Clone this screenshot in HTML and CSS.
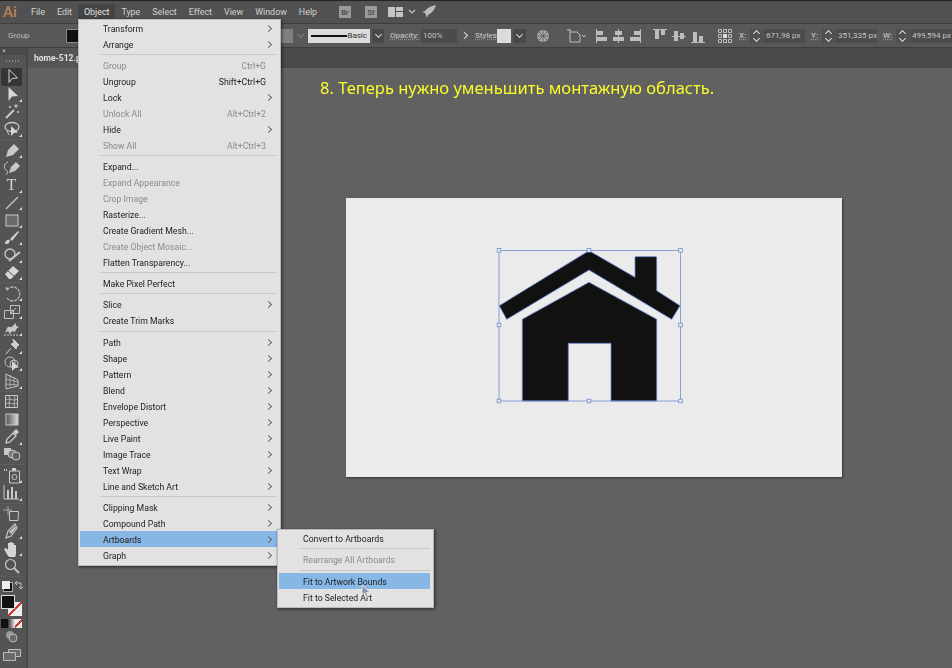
FILE: index.html
```html
<!DOCTYPE html>
<html lang="en">

<head>
    <meta charset="UTF-8">
    <meta name="viewport" content="width=device-width, initial-scale=1.0">
    <title>Illustrator</title>
    <link rel="stylesheet" href="styles.css">
</head>

<body>
    <div class="app">
        <!-- menu bar -->
        <header class="menubar">
            <span class="logo">Ai</span>
            <nav class="menus">
                <span class="menu-title">File</span>
                <span class="menu-title">Edit</span>
                <span class="menu-title active">Object</span>
                <span class="menu-title">Type</span>
                <span class="menu-title">Select</span>
                <span class="menu-title">Effect</span>
                <span class="menu-title">View</span>
                <span class="menu-title">Window</span>
                <span class="menu-title">Help</span>
            </nav>
            <span class="chip chip-br">Br</span>
            <span class="chip chip-st">St</span>
            <svg class="bar-icon" width="34" height="12" viewBox="0 0 34 12">
                <path d="M0 1h7v10H0zM8 1h7v4H8zM8 6h7v5H8z" fill="#c4c4c4" />
                <path d="M21 4l3 3 3-3" fill="none" stroke="#c4c4c4" stroke-width="1.2" />
            </svg>
            <svg class="bar-icon rocket" width="14" height="14" viewBox="0 0 14 14">
                <path d="M14 0C9 1 5 3 3 6L0 7l3 1 1 2 1 3 1-3c4-2 7-6 8-10z" fill="#bdbdbd" />
            </svg>
        </header>

        <!-- control bar -->
        <div class="controlbar">
            <span class="ctl-label">Group</span>
            <span class="fill-swatch"></span>
            <span></span>
            <span class="grey-chip"></span>
            <span class="chev dim"></span>
            <span class="stroke-box"><i class="stroke-line"></i>Basic</span>
            <span class="chev btn"></span>
            <span class="ctl-label dotted op-label">Opacity:</span>
            <span class="field">100%</span>
            <span class="next"></span>
            <span class="ctl-label dotted st-label">Styles:</span>
            <span class="style-swatch"></span>
            <span class="chev btn"></span>
            <svg class="ctl-icon globe" width="14" height="14" viewBox="0 0 14 14">
                <circle cx="7" cy="7" r="6" fill="#a8a8a8" />
                <path d="M7 1v12M1 7h12M3 3l8 8M11 3l-8 8" stroke="#5a5a5a" stroke-width=".8" />
            </svg>
            <svg class="ctl-icon ab-icon" width="20" height="14" viewBox="0 0 20 14">
                <path d="M3 3h7l3 3v7H3z" fill="none" stroke="#bdbdbd" />
                <path d="M0 1h3M3 0v3" stroke="#bdbdbd" />
                <path d="M15 6l2 2 2-2" fill="none" stroke="#bdbdbd" />
            </svg>
            <div class="aligns">
                <svg width="116" height="14" viewBox="0 0 116 14">
                    <g fill="#bdbdbd">
                        <path d="M2 0h1v14H2zM3 2h6v4H3zM3 8h10v4H3z" />
                        <path d="M24 0h1v14h-1zM21 2h7v4h-7zM19 8h11v4H19z" />
                        <path d="M46 0h1v14h-1zM40 2h6v4h-6zM36 8h10v4H36z" />
                        <path d="M59 0h14v1H59zM61 1h4v9h-4zM67 1h4v5h-4z" />
                        <path d="M78 7h14v1H78zM80 2h4v10h-4zM86 4h4v6h-4z" />
                        <path d="M97 13h14v1H97zM99 3h4v10h-4zM105 7h4v6h-4z" />
                    </g>
                </svg>
            </div>
            <svg class="ctl-icon ref-point" width="14" height="14" viewBox="0 0 14 14">
                <path d="M.5.5h3v3h-3zM5.5.5h3v3h-3zM10.5.5h3v3h-3zM.5 5.5h3v3h-3zM10.5 5.5h3v3h-3zM.5 10.5h3v3h-3zM5.5 10.5h3v3h-3zM10.5 10.5h3v3h-3z" fill="none" stroke="#bdbdbd" />
                <path d="M5 5h4v4H5z" fill="#dcdcdc" />
            </svg>
            <span class="ctl-label dotted x-label">X:</span>
            <div class="num"><span class="stepper"></span><span class="field">671,98 px</span></div>
            <span class="ctl-label dotted xy">Y:</span>
            <div class="num"><span class="stepper"></span><span class="field">351,335 px</span></div>
            <span class="ctl-label dotted xy">W:</span>
            <div class="num"><span class="stepper"></span><span class="field">499,594 px</span></div>
        </div>

        <div class="workspace">
            <!-- tools -->
            <aside class="toolbar">
                <div class="panel-head">&raquo;</div>
                <div class="grip"></div>
                <div class="tool-group">
                    <div class="tool selected"><svg width="18" height="17" viewBox="0 0 18 17"><path d="M6 1.5v13l3-4 5.5-.5z" fill="none" stroke="#d6d6d6" /></svg></div>
                    <div class="tool more"><svg width="18" height="17" viewBox="0 0 18 17"><path d="M5.5 1v14L9 10.5l6-.5z" fill="#d6d6d6" /></svg></div>
                    <div class="tool"><svg width="18" height="17" viewBox="0 0 18 17"><path d="M3 15l8-8" stroke="#d0d0d0" stroke-width="1.8" /><path d="M13 1v4M11 3h4M7 3v2M6 4h2M15 8v2M14 9h2" stroke="#d0d0d0" /></svg></div>
                    <div class="tool more"><svg width="18" height="17" viewBox="0 0 18 17"><ellipse cx="9" cy="6" rx="7" ry="4.5" fill="none" stroke="#c8c8c8" stroke-width="1.3" /><path d="M8 5v10l3-3 4-.5z" fill="#d6d6d6" /><path d="M4 10l2 4" stroke="#c8c8c8" /></svg></div>
                </div>
                <div class="tool-group">
                    <div class="tool more"><svg width="18" height="17" viewBox="0 0 18 17"><path d="M3 15l2-7 6-6 5 5-6 6z" fill="#c8c8c8" /></svg></div>
                    <div class="tool"><svg width="18" height="17" viewBox="0 0 18 17"><path d="M6 14l2-6 5-5 4 4-5 5z" fill="#c8c8c8" /><path d="M5 3C0 5 1 10 3 11s2 3 0 5" fill="none" stroke="#c8c8c8" /></svg></div>
                    <div class="tool more type-tool">T</div>
                    <div class="tool more"><svg width="18" height="17" viewBox="0 0 18 17"><path d="M3 15L15 3" stroke="#c8c8c8" stroke-width="1.2" /></svg></div>
                    <div class="tool more"><svg width="18" height="17" viewBox="0 0 18 17"><rect x="3" y="3" width="12" height="11" fill="#6a6a6a" stroke="#c8c8c8" /></svg></div>
                    <div class="tool more"><svg width="18" height="17" viewBox="0 0 18 17"><path d="M2 15c0-4 3-5 5-4l-1 3c-1 1-3 1-4 1zM7 10l8-8 1 1-7 9z" fill="#d0d0d0" /></svg></div>
                    <div class="tool more"><svg width="18" height="17" viewBox="0 0 18 17"><circle cx="7" cy="7" r="5" fill="none" stroke="#c8c8c8" stroke-width="1.3" /><path d="M6 14L17 5" stroke="#c8c8c8" stroke-width="2" /></svg></div>
                    <div class="tool more"><svg width="18" height="17" viewBox="0 0 18 17"><path d="M2 10l8-8 6 5-8 8H6z" fill="#d6d6d6" /><path d="M5 7l6 5" stroke="#535353" /></svg></div>
                </div>
                <div class="tool-group">
                    <div class="tool more"><svg width="18" height="17" viewBox="0 0 18 17"><path d="M4 5a7 7 0 1 1 0 8" fill="none" stroke="#b8b8b8" stroke-width="1.3" stroke-dasharray="3 1" /><path d="M2 2l4 1-2 3z" fill="#b8b8b8" /></svg></div>
                    <div class="tool more"><svg width="18" height="17" viewBox="0 0 18 17"><path d="M1.5 7.5h9v8h-9zM7.5 2.5h9v8h-9z" fill="none" stroke="#c0c0c0" /><path d="M7 11l6-6" stroke="#c0c0c0" /></svg></div>
                    <div class="tool more"><svg width="18" height="17" viewBox="0 0 18 17"><path d="M2 13c2-4 2-7 5-6s4-4 6-4c-1 2 0 3 3 4-2 1-3 2-4 5l-3-1-2 3-2-3z" fill="#c8c8c8" /><path d="M1 15h14" stroke="#c8c8c8" stroke-dasharray="2 1" /></svg></div>
                    <div class="tool more"><svg width="18" height="17" viewBox="0 0 18 17"><path d="M10 1l6 6-2 1-1 3-5-5 3-1zM8 10l-5 6" fill="#d0d0d0" stroke="#d0d0d0" /></svg></div>
                    <div class="tool more"><svg width="18" height="17" viewBox="0 0 18 17"><circle cx="7" cy="7" r="5" fill="none" stroke="#c0c0c0" /><circle cx="11" cy="9" r="4" fill="none" stroke="#c0c0c0" /><path d="M9 6v10l3-3 4-.5z" fill="#d6d6d6" /></svg></div>
                    <div class="tool more"><svg width="18" height="17" viewBox="0 0 18 17"><path d="M3 1v15l12-3V7z" fill="none" stroke="#c8c8c8" /><path d="M3 6l12 3M3 11l12 1M7 2v12M11 4v9" stroke="#c8c8c8" stroke-width=".7" /></svg></div>
                </div>
                <div class="tool-group">
                    <div class="tool"><svg width="18" height="17" viewBox="0 0 18 17"><path d="M2.5 2.5h12v12h-12z" fill="none" stroke="#c8c8c8" /><path d="M3 7c4-3 7 2 11-1M3 11c4-3 7 2 11-1M6 3c3 4-2 7 1 11M11 3c3 4-2 7 1 11" fill="none" stroke="#c8c8c8" stroke-width=".8" /></svg></div>
                    <div class="tool"><svg width="18" height="17" viewBox="0 0 18 17"><defs><linearGradient id="grad"><stop offset="0" stop-color="#555" /><stop offset="1" stop-color="#d8d8d8" /></linearGradient></defs><rect x="3" y="3" width="12" height="11" fill="url(#grad)" stroke="#c8c8c8" /></svg></div>
                    <div class="tool more"><svg width="18" height="17" viewBox="0 0 18 17"><path d="M3 15l1-4 6-6 3 3-6 6z" fill="none" stroke="#d0d0d0" stroke-width="1.2" /><path d="M10 4l3-3 3 3-3 3z" fill="#d0d0d0" /></svg></div>
                    <div class="tool"><svg width="18" height="17" viewBox="0 0 18 17"><rect x="1" y="2" width="7" height="7" fill="#c8c8c8" /><circle cx="9" cy="8" r="4" fill="#777" stroke="#c8c8c8" /><circle cx="13" cy="10" r="4" fill="#616161" stroke="#c8c8c8" /></svg></div>
                </div>
                <div class="tool-group">
                    <div class="tool more"><svg width="18" height="17" viewBox="0 0 18 17"><path d="M6.5 4h10v12h-10z" fill="none" stroke="#c8c8c8" /><circle cx="11.5" cy="10" r="2.5" fill="none" stroke="#c8c8c8" /><path d="M9 1h4v3H9zM1 2h1v2H1zM3 2h1v2H3z" fill="#c8c8c8" /></svg></div>
                    <div class="tool more"><svg width="18" height="17" viewBox="0 0 18 17"><path d="M1 1v14h15" fill="none" stroke="#c8c8c8" /><path d="M4 6h2v9H4zM8 3h2v12H8zM12 7h2v8h-2z" fill="#c8c8c8" /></svg></div>
                </div>
                <div class="tool-group">
                    <div class="tool"><svg width="18" height="17" viewBox="0 0 18 17"><path d="M6.500 6.500h9l-.5 9H6.500z" fill="none" stroke="#c8c8c8" /><path d="M0 5h9M5 1v9" stroke="#c8c8c8" stroke-width=".7" /></svg></div>
                    <div class="tool more"><svg width="18" height="17" viewBox="0 0 18 17"><path d="M3 15l2-7 7-7 2 4-6 8z" fill="none" stroke="#c8c8c8" stroke-width="1.2" /><path d="M6 9l6-6 1 2-5 6z" fill="#c8c8c8" /></svg></div>
                    <div class="tool more"><svg width="18" height="17" viewBox="0 0 18 17"><path d="M5 16L1 9l2-1 2 2V3h2v4-5h2v5-4h2v5-3h2v8c0 3-1 5-3 6z" fill="#d6d6d6" /></svg></div>
                    <div class="tool"><svg width="18" height="17" viewBox="0 0 18 17"><circle cx="7.5" cy="6.5" r="5" fill="none" stroke="#c8c8c8" stroke-width="1.2" /><path d="M11 10l5 5" stroke="#c8c8c8" stroke-width="1.8" /></svg></div>
                </div>
                <div class="color-tools">
                    <div class="swap-row">
                        <span class="mini-default"></span>
                        <svg width="9" height="9" viewBox="0 0 9 9"><path d="M1 2h6v6M1 2l2-2M1 2l2 2M7 8L5 6M7 8l2-2" fill="none" stroke="#c0c0c0" /></svg>
                    </div>
                    <div class="fill-stroke">
                        <span class="big-stroke"></span>
                        <span class="big-fill"></span>
                    </div>
                    <div class="modes">
                        <span class="mode-black"></span>
                        <span class="mode-grad"></span>
                        <span class="mode-none"></span>
                    </div>
                    <svg class="draw-mode" width="14" height="13" viewBox="0 0 14 13"><circle cx="5" cy="5" r="4" fill="#9a9a9a" /><circle cx="8" cy="8" r="4" fill="#6a6a6a" stroke="#bdbdbd" /></svg>
                    <svg class="screen-mode" width="18" height="12" viewBox="0 0 18 12"><path d="M5.5.5h12v7h-12z" fill="#6a6a6a" stroke="#bdbdbd" /><path d="M.5 3.5h12v8H.5z" fill="#6a6a6a" stroke="#bdbdbd" /></svg>
                </div>
            </aside>

            <main class="document">
                <div class="tabs"><span class="tab">home-512.png</span></div>
                <div class="canvas">
                    <p class="caption">8. Теперь нужно уменьшить монтажную область.</p>
                    <div class="artboard">
                        <svg width="496" height="279" viewBox="346 198 496 279">
                            <g fill="#111" stroke="#5f82cc" stroke-width=".8">
                                <path d="M589 250.7L635 277.3V257.5q0-.8.8-.8h20.1q.8 0 .8.8V290.7L680 305.7 671.7 319.3 589 270 506.7 319.3 499.3 305.7z" />
                                <path d="M589 282.3L656.7 319.3V401H611V343.3H568.3V401H522.3V319.3z" />
                            </g>
                            <path d="M499 250.5H680.5V401H499z" fill="none" stroke="#6f8ed0" stroke-width=".8" />
                            <g fill="#eee" stroke="#6f8ed0" stroke-width=".8">
                                <rect x="497.2" y="248.5" width="3.6" height="3.6" />
                                <rect x="587.2" y="248.5" width="3.6" height="3.6" />
                                <rect x="678.7" y="248.5" width="3.6" height="3.6" />
                                <rect x="497.2" y="323.2" width="3.6" height="3.6" />
                                <rect x="678.7" y="323.2" width="3.6" height="3.6" />
                                <rect x="497.2" y="399.2" width="3.6" height="3.6" />
                                <rect x="587.2" y="399.2" width="3.6" height="3.6" />
                                <rect x="678.7" y="399.2" width="3.6" height="3.6" />
                            </g>
                        </svg>
                    </div>
                </div>
            </main>
        </div>

        <!-- Object menu -->
        <div class="dropdown object-menu">
            <div class="item sub">Transform</div>
            <div class="item sub">Arrange</div>
            <div class="sep"></div>
            <div class="item off">Group<span>Ctrl+G</span></div>
            <div class="item">Ungroup<span>Shift+Ctrl+G</span></div>
            <div class="item sub">Lock</div>
            <div class="item off">Unlock All<span>Alt+Ctrl+2</span></div>
            <div class="item sub">Hide</div>
            <div class="item off">Show All<span>Alt+Ctrl+3</span></div>
            <div class="sep"></div>
            <div class="item">Expand...</div>
            <div class="item off">Expand Appearance</div>
            <div class="item off">Crop Image</div>
            <div class="item">Rasterize...</div>
            <div class="item">Create Gradient Mesh...</div>
            <div class="item off">Create Object Mosaic...</div>
            <div class="item">Flatten Transparency...</div>
            <div class="sep"></div>
            <div class="item">Make Pixel Perfect</div>
            <div class="sep"></div>
            <div class="item sub">Slice</div>
            <div class="item">Create Trim Marks</div>
            <div class="sep wide"></div>
            <div class="item sub">Path</div>
            <div class="item sub">Shape</div>
            <div class="item sub">Pattern</div>
            <div class="item sub">Blend</div>
            <div class="item sub">Envelope Distort</div>
            <div class="item sub">Perspective</div>
            <div class="item sub">Live Paint</div>
            <div class="item sub">Image Trace</div>
            <div class="item sub">Text Wrap</div>
            <div class="item sub">Line and Sketch Art</div>
            <div class="sep"></div>
            <div class="item sub">Clipping Mask</div>
            <div class="item sub">Compound Path</div>
            <div class="item sub hot">Artboards</div>
            <div class="item sub">Graph</div>
        </div>

        <!-- Artboards submenu -->
        <div class="dropdown artboards-menu">
            <div class="item">Convert to Artboards</div>
            <div class="sep"></div>
            <div class="item off">Rearrange All Artboards</div>
            <div class="sep wide"></div>
            <div class="item hot">Fit to Artwork Bounds</div>
            <div class="item">Fit to Selected Art</div>
        </div>

        <svg class="cursor" width="10" height="15" viewBox="0 0 10 15">
            <path d="M1 1v10l2.5-2 1.5 4 2-1-1.500-3.5H9z" fill="#8a96a8" stroke="#eee" stroke-width=".8" />
        </svg>
    </div>
</body>

</html>
```

FILE: styles.css
```css
* {
    box-sizing: border-box;
}

body {
    margin: 0;
    background-color: #616161;
    font-family: Roboto, "Noto Sans", sans-serif;
    font-size: 9px;
    color: #d0d0d0;
    overflow: hidden;
}

.app {
    position: relative;
    width: 952px;
    height: 668px;
    display: flex;
    flex-direction: column;
    overflow: hidden;
    filter: blur(0.35px);
}

/* menu bar */
.menubar {
    height: 23px;
    flex: none;
    display: flex;
    align-items: center;
    padding-left: 3px;
    background-color: #515151;
    border-top: 1px solid #222;
}

.logo {
    width: 22px;
    font-size: 15px;
    font-weight: 500;
    color: #b9835a;
}

.menus {
    display: flex;
    width: 305px;
    font-size: 8.9px;
}

.menu-title {
    padding: 3px 6px;
    color: #d2d2d2;
}

.menu-title.active {
    background-color: #444;
    color: #e0e0e0;
}

.chip {
    width: 12px;
    height: 12px;
    display: flex;
    align-items: center;
    justify-content: center;
    font-size: 7.5px;
    font-weight: 500;
    color: #444;
    background-color: #9a9a9a;
}

.chip-br {
    margin-left: 9px;
}

.chip-st {
    margin-left: 14px;
}

.bar-icon {
    margin-left: 11px;
}

.bar-icon.rocket {
    margin-left: 0;
}

/* control bar */
.controlbar {
    height: 25px;
    flex: none;
    display: grid;
    grid-template-columns: 58px 22px 193px 12px 15px 62px 16px 35px 36px 15px 25px 14px 17px 28px 34px 120px 26px 14px 55px 17px 55px 19px 57px;
    align-items: center;
    padding-left: 8px;
    background-color: #585858;
    border-top: 1px solid #3e3e3e;
    border-bottom: 1px solid #3e3e3e;
    font-size: 8px;
    overflow: hidden;
}

.ctl-label {
    color: #bdbdbd;
}

.dotted {
    font-weight: 500;
    text-decoration: underline dotted #9a9a9a;
}

.op-label {
    padding-left: 4px;
}

.st-label {
    padding-left: 3px;
}

.x-label {
    padding-left: 3px;
}

.xy {
    padding-left: 6px;
}

.fill-swatch {
    width: 13px;
    height: 14px;
    background-color: #111;
    border: 1px solid #888;
}

.grey-chip {
    height: 14px;
    background-color: #808080;
}

.chev {
    display: flex;
    align-items: center;
    justify-content: center;
    height: 14px;
}

.chev::after {
    content: "";
    width: 4px;
    height: 4px;
    margin-top: -3px;
    border-right: 1px solid #d8d8d8;
    border-bottom: 1px solid #d8d8d8;
    transform: rotate(45deg);
}

.chev.dim::after {
    border-color: #808080;
}

.chev.btn {
    margin: 0 2px;
    background-color: #484848;
}

.stroke-box {
    height: 14px;
    display: flex;
    align-items: center;
    justify-content: space-between;
    padding: 0 3px;
    color: #333;
    background-color: #dcdcdc;
}

.stroke-line {
    width: 36px;
    height: 2px;
    background-color: #111;
}

.field {
    height: 14px;
    flex: 1;
    display: flex;
    align-items: center;
    padding-left: 2px;
    color: #c4c4c4;
    background-color: #4b4b4b;
    white-space: nowrap;
    overflow: hidden;
}

.next {
    display: flex;
    justify-content: center;
}

.next::after {
    content: "";
    width: 4px;
    height: 4px;
    border-right: 1px solid #ddd;
    border-top: 1px solid #ddd;
    transform: rotate(45deg);
}

.style-swatch {
    height: 14px;
    background-color: #dcdcdc;
}

.ctl-icon {
    display: block;
}

.globe {
    margin-left: 8px;
}

.ab-icon {
    margin-left: 11px;
}

.ref-point {
    margin-left: 8px;
}

.aligns {
    display: flex;
    padding-left: 4px;
}

.num {
    display: flex;
    align-items: center;
    gap: 1px;
}

.stepper {
    flex: none;
    width: 13px;
    height: 14px;
    position: relative;
    background-color: #4f4f4f;
}

.stepper::before,
.stepper::after {
    content: "";
    position: absolute;
    left: 4px;
    width: 4px;
    height: 4px;
    transform: rotate(45deg);
    border: 0 solid #ddd;
}

.stepper::before {
    top: 2px;
    border-left-width: 1px;
    border-top-width: 1px;
}

.stepper::after {
    bottom: 2px;
    border-right-width: 1px;
    border-bottom-width: 1px;
}

/* tools + document */
.workspace {
    flex: 1;
    display: flex;
    min-height: 0;
}

.toolbar {
    width: 28px;
    flex: none;
    display: flex;
    flex-direction: column;
    background-color: #545454;
    border-right: 2px solid #474747;
}

.toolbar > * {
    flex: none;
}

.panel-head {
    height: 7px;
    padding-left: 2px;
    font-size: 8px;
    line-height: 6px;
    color: #ccc;
    background-color: #4a4a4a;
}

.grip {
    height: 9px;
    margin: 4px 6px 0;
    background: repeating-linear-gradient(90deg, #8a8a8a 0 1px, transparent 1px 3px) 0 1px / 100% 2px no-repeat;
}

.tool-group {
    display: flex;
    flex-direction: column;
    padding-bottom: 1px;
    margin-bottom: 1.4px;
    border-bottom: 1px solid #5e5e5e;
}

.tool {
    position: relative;
    height: 17.5px;
    display: flex;
    align-items: center;
    justify-content: center;
    margin: 0 4px 0 1px;
}

.tool.selected {
    background-color: #353535;
    border-radius: 2px;
}

.tool.more::after {
    content: "";
    position: absolute;
    right: 0;
    bottom: 1px;
    border-style: solid;
    border-width: 0 0 3px 3px;
    border-color: transparent transparent #ddd transparent;
}

.type-tool {
    font-family: "Liberation Serif", serif;
    font-size: 16px;
    color: #d0d0d0;
}

.color-tools {
    position: relative;
    display: flex;
    flex-direction: column;
}

.swap-row {
    display: flex;
    align-items: center;
    justify-content: space-between;
    padding: 2.5px 3px 0 2px;
}

.mini-default {
    width: 8px;
    height: 8px;
    background-color: #eee;
    box-shadow: 2px 2px 0 #111, 2px 2px 0 1px #aaa;
}

.fill-stroke {
    position: relative;
    height: 24px;
    margin-top: 5px;
}

.big-fill {
    position: absolute;
    left: 1px;
    top: 0;
    width: 14px;
    height: 14px;
    background-color: #111;
    border: 1px solid #ddd;
}

.big-stroke {
    position: absolute;
    left: 8px;
    top: 7px;
    width: 14px;
    height: 14px;
    background: linear-gradient(135deg, #eee 44%, #c83a32 44% 56%, #eee 56%);
}

.modes {
    display: flex;
    flex: none;
    height: 9px;
    margin: 0 4px 0 1px;
}

.modes span {
    flex: 1;
}

.mode-black {
    background-color: #111;
}

.mode-grad {
    background: linear-gradient(90deg, #333, #eee);
}

.mode-none {
    background: linear-gradient(135deg, #eee 42%, #c83a32 42% 58%, #eee 58%);
}

.draw-mode {
    flex: none;
    margin: 2.5px 0 0 5px;
}

.screen-mode {
    flex: none;
    margin: 5.5px 0 0 3px;
}

.document {
    flex: 1;
    min-width: 0;
    display: flex;
    flex-direction: column;
}

.tabs {
    height: 20px;
    flex: none;
    background-color: #4a4a4a;
    border-bottom: 1px solid #444;
}

.tab {
    display: block;
    width: 140px;
    height: 20px;
    line-height: 20px;
    padding-left: 6px;
    font-size: 8.5px;
    font-weight: 700;
    color: #e2e2e2;
    background-color: #555;
}

.canvas {
    flex: 1;
    padding: 9px 0 0 318px;
    background-color: #616161;
}

.caption {
    margin: 0 0 99px -26px;
    height: 22px;
    line-height: 22px;
    font-family: "Noto Sans", sans-serif;
    font-size: 16.5px;
    color: #fbfb2c;
    white-space: nowrap;
}

.artboard {
    width: 496px;
    height: 279px;
    background-color: #ebebeb;
    box-shadow: 1px 1px 2px rgba(0, 0, 0, 0.5);
}

.artboard svg {
    display: block;
}

/* dropdown menus */
.dropdown {
    position: absolute;
    display: flex;
    flex-direction: column;
    padding: 0 3px 0 1px;
    font-size: 8.7px;
    color: #222;
    background-color: #e2e2e2;
    box-shadow: 1px 1px 3px rgba(0, 0, 0, 0.6);
    border: 1px solid #bbb;
}

.object-menu {
    left: 78px;
    top: 19px;
    width: 203px;
    height: 547px;
}

.artboards-menu {
    left: 277px;
    top: 529px;
    width: 157px;
    height: 79px;
}

.item {
    position: relative;
    height: 16px;
    flex: none;
    display: flex;
    align-items: center;
    justify-content: space-between;
    padding: 2px 11px 0 23px;
    white-space: nowrap;
}

.artboards-menu .item {
    padding-left: 24px;
}

.item.off {
    color: #8b8b8b;
}

.item.hot {
    background-color: #86b7e5;
}

.item.sub::after {
    content: "";
    position: absolute;
    right: 6px;
    top: 6px;
    width: 4px;
    height: 4px;
    border-right: 1px solid #666;
    border-top: 1px solid #666;
    transform: rotate(45deg);
}

.sep {
    height: 5px;
    flex: none;
    margin-left: 20px;
    background: linear-gradient(#c8c8c8, #c8c8c8) center / 100% 1px no-repeat;
}

.sep.wide {
    height: 6px;
}

.cursor {
    position: absolute;
    left: 361px;
    top: 584px;
}
```
